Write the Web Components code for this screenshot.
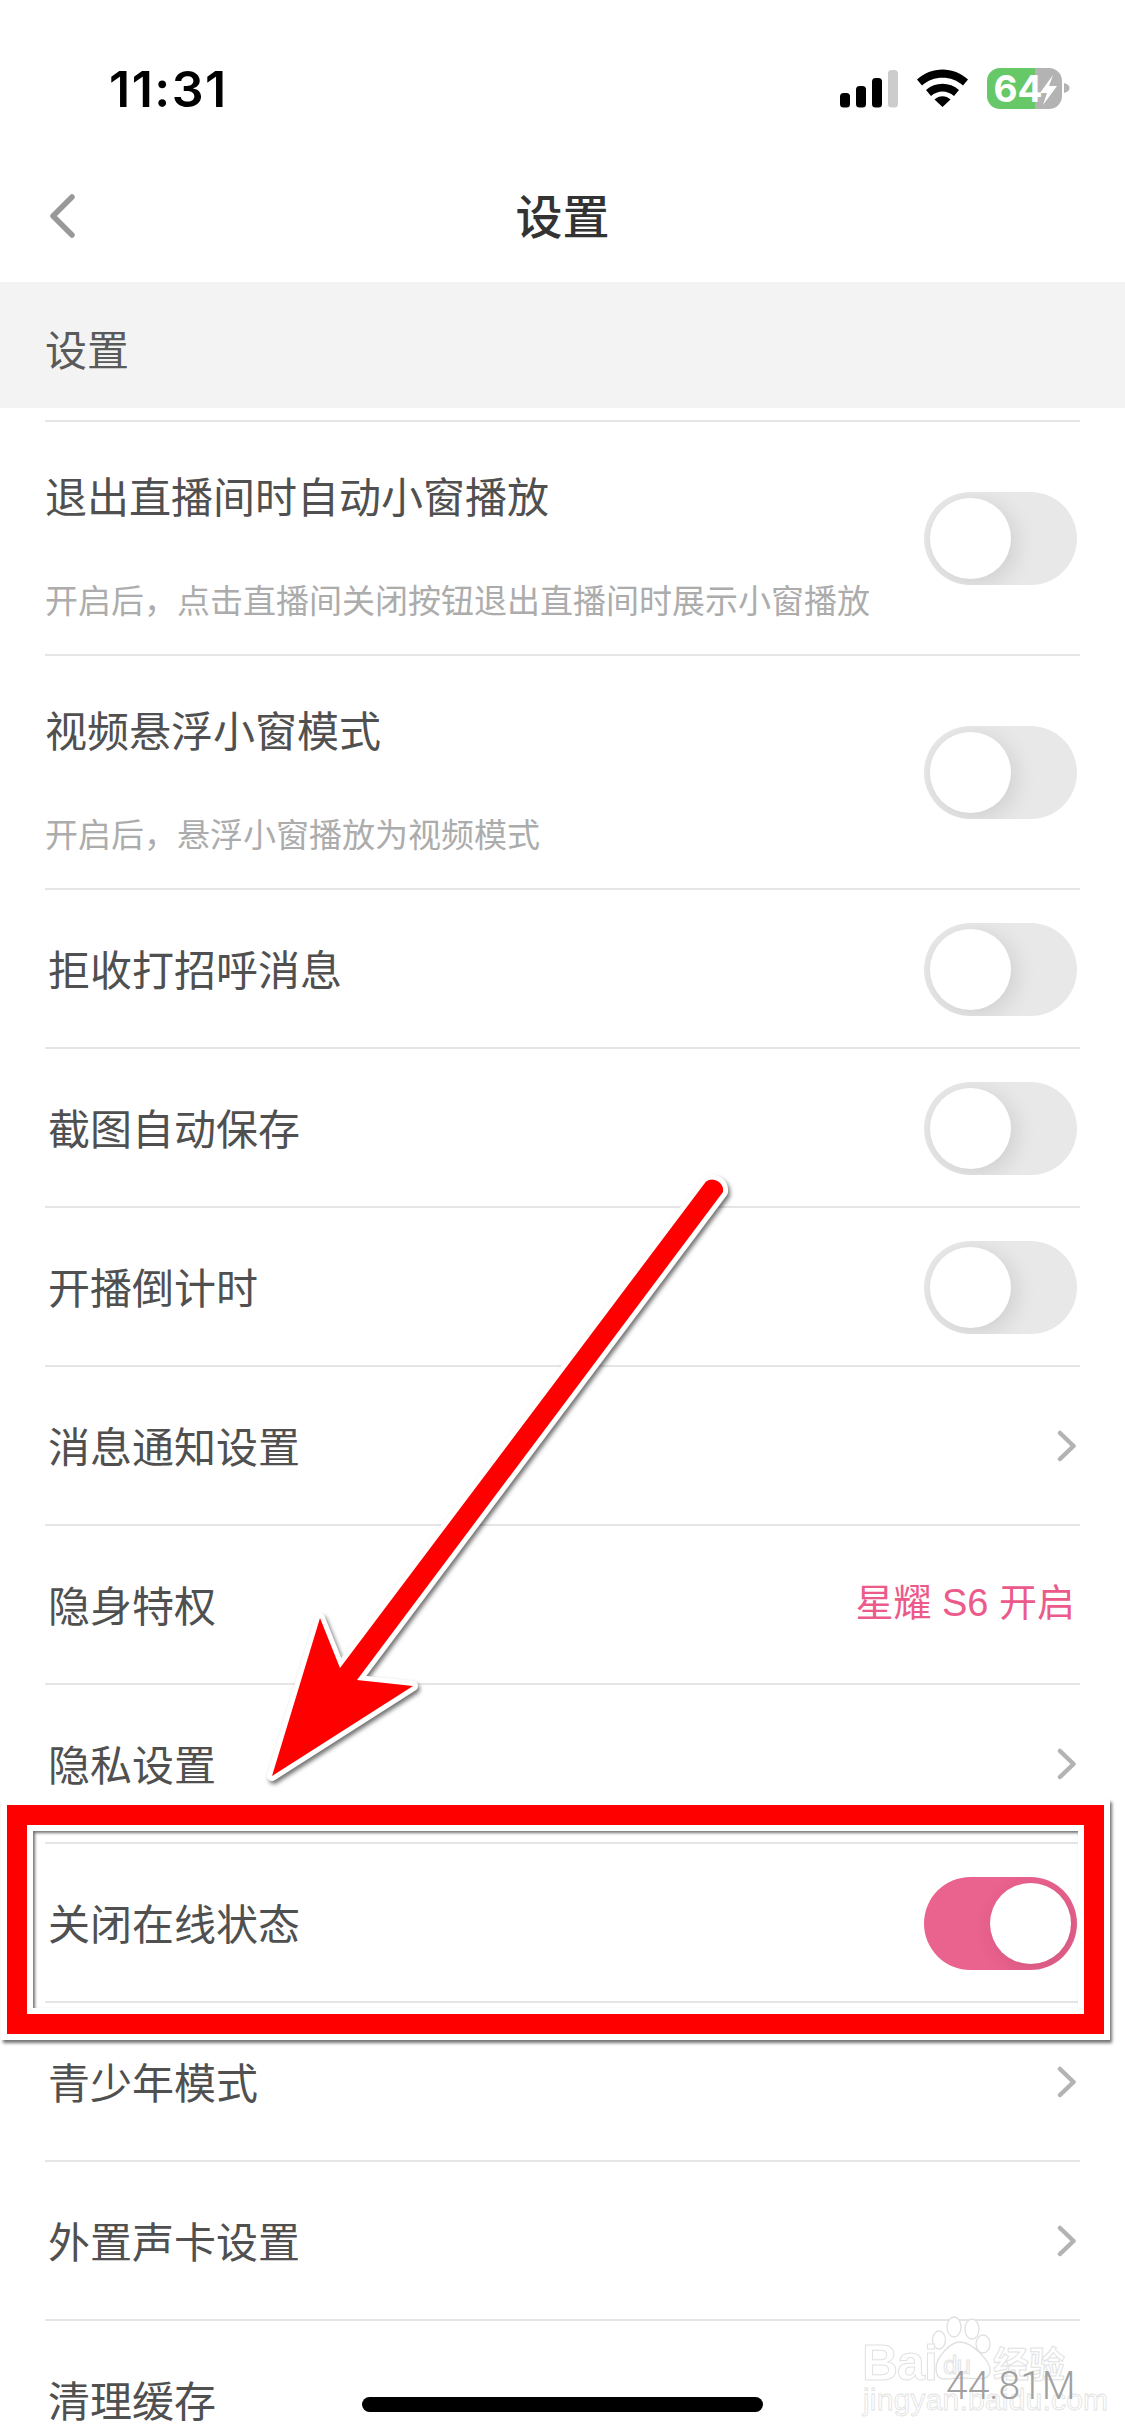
<!DOCTYPE html>
<html lang="zh-CN"><head><meta charset="utf-8"><style>
html,body{margin:0;padding:0;background:#fff}
body{font-family:"Noto Sans CJK SC","Noto Sans",sans-serif}
</style></head><body>
<app-page>
  <status-bar></status-bar>
  <nav-bar>设置</nav-bar>
  <section-head>设置</section-head>
  <setting-list>
    <setting-row tall title="退出直播间时自动小窗播放" sub="开启后，点击直播间关闭按钮退出直播间时展示小窗播放" kind="off"></setting-row>
    <setting-row tall title="视频悬浮小窗模式" sub="开启后，悬浮小窗播放为视频模式" kind="off"></setting-row>
    <setting-row title="拒收打招呼消息" kind="off"></setting-row>
    <setting-row title="截图自动保存" kind="off"></setting-row>
    <setting-row title="开播倒计时" kind="off"></setting-row>
    <setting-row title="消息通知设置" kind="chevron"></setting-row>
    <setting-row title="隐身特权" kind="value" value="星耀 S6 开启"></setting-row>
    <setting-row title="隐私设置" kind="chevron"></setting-row>
    <setting-row title="关闭在线状态" kind="on"></setting-row>
    <setting-row title="青少年模式" kind="chevron"></setting-row>
    <setting-row title="外置声卡设置" kind="chevron"></setting-row>
    <setting-row title="清理缓存" kind="none"></setting-row>
  </setting-list>
  <water-mark></water-mark>
  <home-bar></home-bar>
  <call-out></call-out>
</app-page>
<script>
const CJK='"Noto Sans CJK SC","Noto Sans",sans-serif';
function def(name,html,init){
  customElements.define(name,class extends HTMLElement{
    constructor(){super();this.attachShadow({mode:'open'}).innerHTML=html}
    connectedCallback(){if(init)init(this)}
  });
}
def('app-page',`<style>:host{display:block;position:relative;width:1125px;height:2436px;overflow:hidden;background:#fff}</style><slot></slot>`);
def('status-bar',`<style>
:host{display:flex;height:180px;box-sizing:border-box;position:relative;align-items:flex-start}
.t{font:600 50px/1 Inter,Roboto,sans-serif;color:#000;margin:64px 0 0 109px;letter-spacing:1.500px}
svg{position:absolute;left:830px;top:60px}
text{font:700 37px Inter,Roboto,sans-serif;fill:#fff}
</style><div class="t">11:31</div>
<svg width="250" height="60" viewBox="830 60 250 60">
<rect x="840" y="93" width="10" height="14.5" rx="3.5"/><rect x="856" y="86" width="10" height="21.5" rx="3.5"/><rect x="872" y="78" width="10" height="29.5" rx="3.5"/><rect x="888" y="70" width="10" height="37.5" rx="3.5" fill="#ccc"/>
<path d="M917 79.500C931 66 954 66 968 79.500L963 85.500C952 75 933 75 922 85.500Z"/><path d="M926 90C935 81.500 950 81.500 959 90L954 96C947 90 938 90 931 96Z"/><path d="M934.500 99.500C939 95 946 95 950.500 99.500L942.500 107Z"/>
<path d="M1000 68H1035V109H1000A13 13 0 0 1 987 96V81A13 13 0 0 1 1000 68Z" fill="#67c868"/>
<path d="M1035 68H1049A13 13 0 0 1 1062 81V96A13 13 0 0 1 1049 109H1035Z" fill="#b3b3b3"/>
<path d="M1064 83C1068 84 1069.500 86 1069.500 88C1069.500 90 1068 92 1064 93Z" fill="#b3b3b3"/>
<text x="993.500" y="102">64</text>
<path d="M1053 75L1040 93H1047L1043 105L1057 86H1049Z" fill="#fff"/>
</svg>`);
def('nav-bar',`<style>
:host{display:flex;height:102px;align-items:flex-start;justify-content:center;position:relative;font:500 47px/1 ${CJK};color:#333}
.x{padding-top:10px}
svg{position:absolute;left:48px;top:13px}
</style><svg width="30" height="46" viewBox="0 0 30 46"><path d="M24 4L5 23L24 42" fill="none" stroke="#999" stroke-width="5.500" stroke-linecap="round" stroke-linejoin="round"/></svg><div class="x"><slot></slot></div>`);
def('section-head',`<style>
:host{display:flex;align-items:center;height:126px;background:#f3f3f3;padding-left:45px;font:400 42px/1 ${CJK};color:#5a5a5a;box-sizing:border-box;padding-top:6px}
</style><slot></slot>`);
def('setting-list',`<style>:host{display:flex;flex-direction:column;padding:12px 45px 0 45px;width:1035px}</style><slot></slot>`);
def('toggle-switch',`<style>
:host{display:block;width:153px;height:93px;border-radius:47px;background:#e8e8e8;overflow:hidden;position:relative;flex:none;margin:2px 3px 0 0}
:host([on]){background:#ea628e}
i{position:absolute;top:6px;left:6px;width:81px;height:81px;border-radius:50%;background:#fff;box-shadow:5px 5px 22px rgba(0,0,0,.11)}
:host([on]) i{left:66px}
</style><i></i>`);
def('setting-row',`<style>
:host{display:flex;align-items:center;border-top:2px solid #e5e5e5;height:159px;box-sizing:border-box;color:#505050;position:relative;justify-content:space-between}
:host([tall]){height:234px;align-items:flex-start}
.l{display:flex;flex-direction:column}
.ti{font:400 42px/1 ${CJK};padding-left:3px;margin-top:-1px}
:host([tall]) .ti{padding-left:0;margin-top:52px}
.su{font:400 33px/1 ${CJK};color:#acacac;margin-top:67px;white-space:nowrap}
.r{display:flex;align-items:center}
:host([tall]) .r{margin-top:68px}
.v{font:400 38px/1 "Liberation Sans",${CJK};color:#ec5a8a;margin-right:5px;white-space:nowrap;margin-top:-4px}
svg{display:block;margin-right:3px}
</style><div class="l"><div class="ti"></div><div class="su"></div></div><div class="r"></div>`,el=>{
  const s=el.shadowRoot;
  s.querySelector('.ti').textContent=el.getAttribute('title');
  el.removeAttribute('title');
  const su=el.getAttribute('sub'),sub=s.querySelector('.su');
  if(su)sub.textContent=su;else sub.remove();
  const k=el.getAttribute('kind'),r=s.querySelector('.r');
  if(k==='on'||k==='off'){const t=document.createElement('toggle-switch');if(k==='on')t.setAttribute('on','');r.append(t)}
  else if(k==='chevron'){r.innerHTML='<svg width="20" height="32" viewBox="0 0 20 32"><path d="M3 3L16.500 16L3 29" fill="none" stroke="#b3b3b3" stroke-width="4.500" stroke-linecap="round" stroke-linejoin="round"/></svg>'}
  else if(k==='value'){const v=document.createElement('div');v.className='v';v.textContent=el.getAttribute('value');r.append(v)}
});
def('water-mark',`<style>
:host{display:block;position:absolute;left:850px;top:2300px;width:275px;height:136px}
.b,.c,.j,.m{position:absolute;white-space:nowrap}
.b{left:12px;top:38px;font:700 50px/1 "Liberation Sans",sans-serif;color:#fff;-webkit-text-stroke:1px #e2e2e2;letter-spacing:-1px}
.c{left:143px;top:44px;font:700 36px/1 ${CJK};color:#fff;-webkit-text-stroke:1px #e2e2e2}
.j{left:13px;top:85px;font:400 30px/1 "Liberation Sans",sans-serif;color:#fff;-webkit-text-stroke:.8px #e2e2e2;letter-spacing:.2px}
.m{left:96px;top:67px;font:300 39px/1 Roboto,sans-serif;color:#a0a0a0}
svg{position:absolute;left:0;top:0}
</style>
<div class="j">jingyan.baidu.com</div>
<svg width="275" height="136" viewBox="850 2300 275 136" fill="#fff" stroke="#e0e0e0" stroke-width="1.300">
<ellipse cx="954" cy="2327" rx="7" ry="10"/><ellipse cx="972" cy="2329" rx="7" ry="10"/><ellipse cx="939" cy="2340" rx="6.500" ry="9"/><ellipse cx="983" cy="2344" rx="7" ry="9"/>
<path d="M960 2342C972 2342 992 2362 990 2372C988 2382 975 2378 961 2378C947 2378 936 2384 936 2368C936 2358 950 2342 960 2342Z"/>
</svg>
<div class="b">Bai</div><div class="b" style="left:93px;top:52px;font-size:26px;font-weight:400">du</div><div class="c">经验</div>
<div class="m">44.81M</div>`);
def('home-bar',`<style>:host{display:block;position:absolute;left:362px;top:2397px;width:401px;height:15px;border-radius:8px;background:#000}</style>`);
def('call-out',`<style>
:host{display:block;position:absolute;left:0;top:0;width:1125px;height:2436px;pointer-events:none}
svg{position:absolute;left:0;top:0;filter:drop-shadow(2px 3px 2px rgba(0,0,0,.55))}
.box{position:absolute;left:7px;top:1805px;width:1097px;height:229px;box-sizing:border-box;border:20px solid #f00;box-shadow:0 0 0 6px #fff,2px 3px 3px 6px rgba(0,0,0,.55)}
.in{position:absolute;inset:0;box-shadow:inset 0 0 0 6px #fff,inset 2px 2px 3px 6px rgba(0,0,0,.55)}
</style>
<div class="box"><div class="in"></div></div>
<svg width="1125" height="2436" viewBox="0 0 1125 2436"><path d="M272 1776L320 1618L340 1668L706 1181.500A11 11 0 0 1 723 1192L357 1680L413 1686Z" fill="#f00" stroke="#fff" stroke-width="10" stroke-linejoin="round"/><path d="M272 1776L320 1618L340 1668L706 1181.500A11 11 0 0 1 723 1192L357 1680L413 1686Z" fill="#f00"/></svg>`);
</script>
</body></html>
